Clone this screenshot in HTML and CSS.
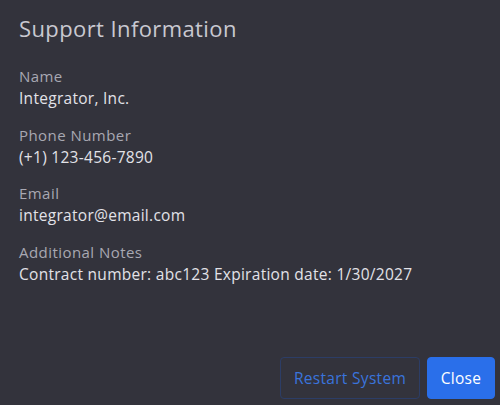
FILE: index.html
```html
<!DOCTYPE html>
<html>
<head>
<meta charset="utf-8">
<link rel="stylesheet" href="styles.css">
</head>
<body>
<div class="dialog">
  <h1 class="title">Support Information</h1>
  <div class="fields">
    <div class="field">
      <div class="label">Name</div>
      <div class="value">Integrator, Inc.</div>
    </div>
    <div class="field">
      <div class="label">Phone Number</div>
      <div class="value">(+1) 123-456-7890</div>
    </div>
    <div class="field">
      <div class="label">Email</div>
      <div class="value">integrator@email.com</div>
    </div>
    <div class="field">
      <div class="label">Additional Notes</div>
      <div class="value">Contract number: abc123 Expiration date: 1/30/2027</div>
    </div>
  </div>
  <div class="footer">
    <button class="btn btn-outline">Restart System</button>
    <button class="btn btn-primary">Close</button>
  </div>
</div>
</body>
</html>
```
FILE: styles.css
```css
html, body {
  margin: 0;
  padding: 0;
}
body {
  background: #33333c;
  font-family: "Open Sans", "Noto Sans", sans-serif;
}
.dialog {
  width: 500px;
  height: 405px;
  box-sizing: border-box;
  padding: 14px 5px 6px 19px;
  display: flex;
  flex-direction: column;
}
.title {
  margin: 0;
  font-size: 22px;
  font-weight: 400;
  color: #c9c9d1;
  line-height: 28px;
  letter-spacing: 0.4px;
}
.fields {
  margin-top: 23px;
  display: flex;
  flex-direction: column;
  gap: 13.7px;
}
.label {
  font-size: 15px;
  color: #a8a8b2;
  line-height: 22px;
  letter-spacing: 0.45px;
}
.value {
  font-size: 15.5px;
  color: #e2e2e8;
  line-height: 23px;
  letter-spacing: 0.28px;
}
.footer {
  margin-top: auto;
  display: flex;
  justify-content: flex-end;
  gap: 7px;
}
.btn {
  font-family: inherit;
  font-size: 15.5px;
  height: 42px;
  border-radius: 4px;
  padding: 0;
  cursor: pointer;
  letter-spacing: 0.3px;
}
.btn-outline {
  background: transparent;
  border: 1px solid #2c3d66;
  color: #3a74dc;
  width: 140px;
}
.btn-primary {
  background: #2a6fea;
  border: 1px solid #2a6fea;
  color: #ffffff;
  width: 68px;
}
```
